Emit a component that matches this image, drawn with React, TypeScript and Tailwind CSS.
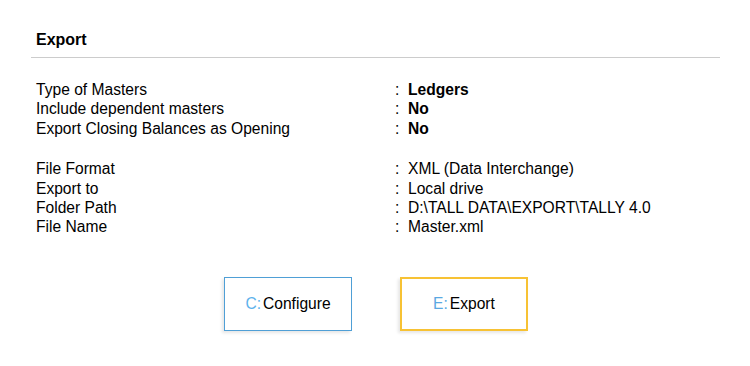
import React from 'react';

type Row = { label: string; value: string; bold?: boolean };

const mastersRows: Row[] = [
  { label: 'Type of Masters', value: 'Ledgers', bold: true },
  { label: 'Include dependent masters', value: 'No', bold: true },
  { label: 'Export Closing Balances as Opening', value: 'No', bold: true },
];

const fileRows: Row[] = [
  { label: 'File Format', value: 'XML (Data Interchange)' },
  { label: 'Export to', value: 'Local drive' },
  { label: 'Folder Path', value: 'D:\\TALL DATA\\EXPORT\\TALLY 4.0' },
  { label: 'File Name', value: 'Master.xml' },
];

const FieldRow: React.FC<{ row: Row }> = ({ row }) => (
  <div className="flex h-[19.4px] items-center">
    <span className="w-[363px] pl-[5px]">{row.label}</span>
    <span className="w-[14px] pl-px">:</span>
    <span className={row.bold ? 'font-bold' : ''}>{row.value}</span>
  </div>
);

export default function App() {
  return (
    <div
      className="h-[366px] w-[750px] bg-white text-[15.6px] text-black"
      style={{ fontFamily: '"Liberation Sans", Arial, sans-serif' }}
    >
      <div className="pl-[31px] pr-[30px] pt-[30px]">
        <div className="pl-[5px] pb-[8px] text-[16px] font-bold leading-[19px]">Export</div>
        <div className="h-px bg-[#cccccc]" />

        <div className="mt-[22px]">
          {mastersRows.map((row) => (
            <FieldRow key={row.label} row={row} />
          ))}
        </div>

        <div className="mt-[21px]">
          {fileRows.map((row) => (
            <FieldRow key={row.label} row={row} />
          ))}
        </div>
      </div>

      <div className="mt-[40px] flex gap-[48px] pl-[224px]">
        <button className="flex h-[54px] w-[128px] items-center justify-center border border-[#4f9fd6] bg-white text-[15.6px] shadow-[-2px_2px_3px_rgba(0,0,0,0.1)]">
          <span className="text-[#5db2ec]">C:</span>
          <span className="ml-[2px]">Configure</span>
        </button>
        <button className="flex h-[54px] w-[128px] items-center justify-center border-2 border-[#f7c234] bg-white text-[15.6px] shadow-[-2px_2px_3px_rgba(0,0,0,0.1)]">
          <span className="text-[#5aa8e2]">E:</span>
          <span className="ml-[2px]">Export</span>
        </button>
      </div>
    </div>
  );
}
